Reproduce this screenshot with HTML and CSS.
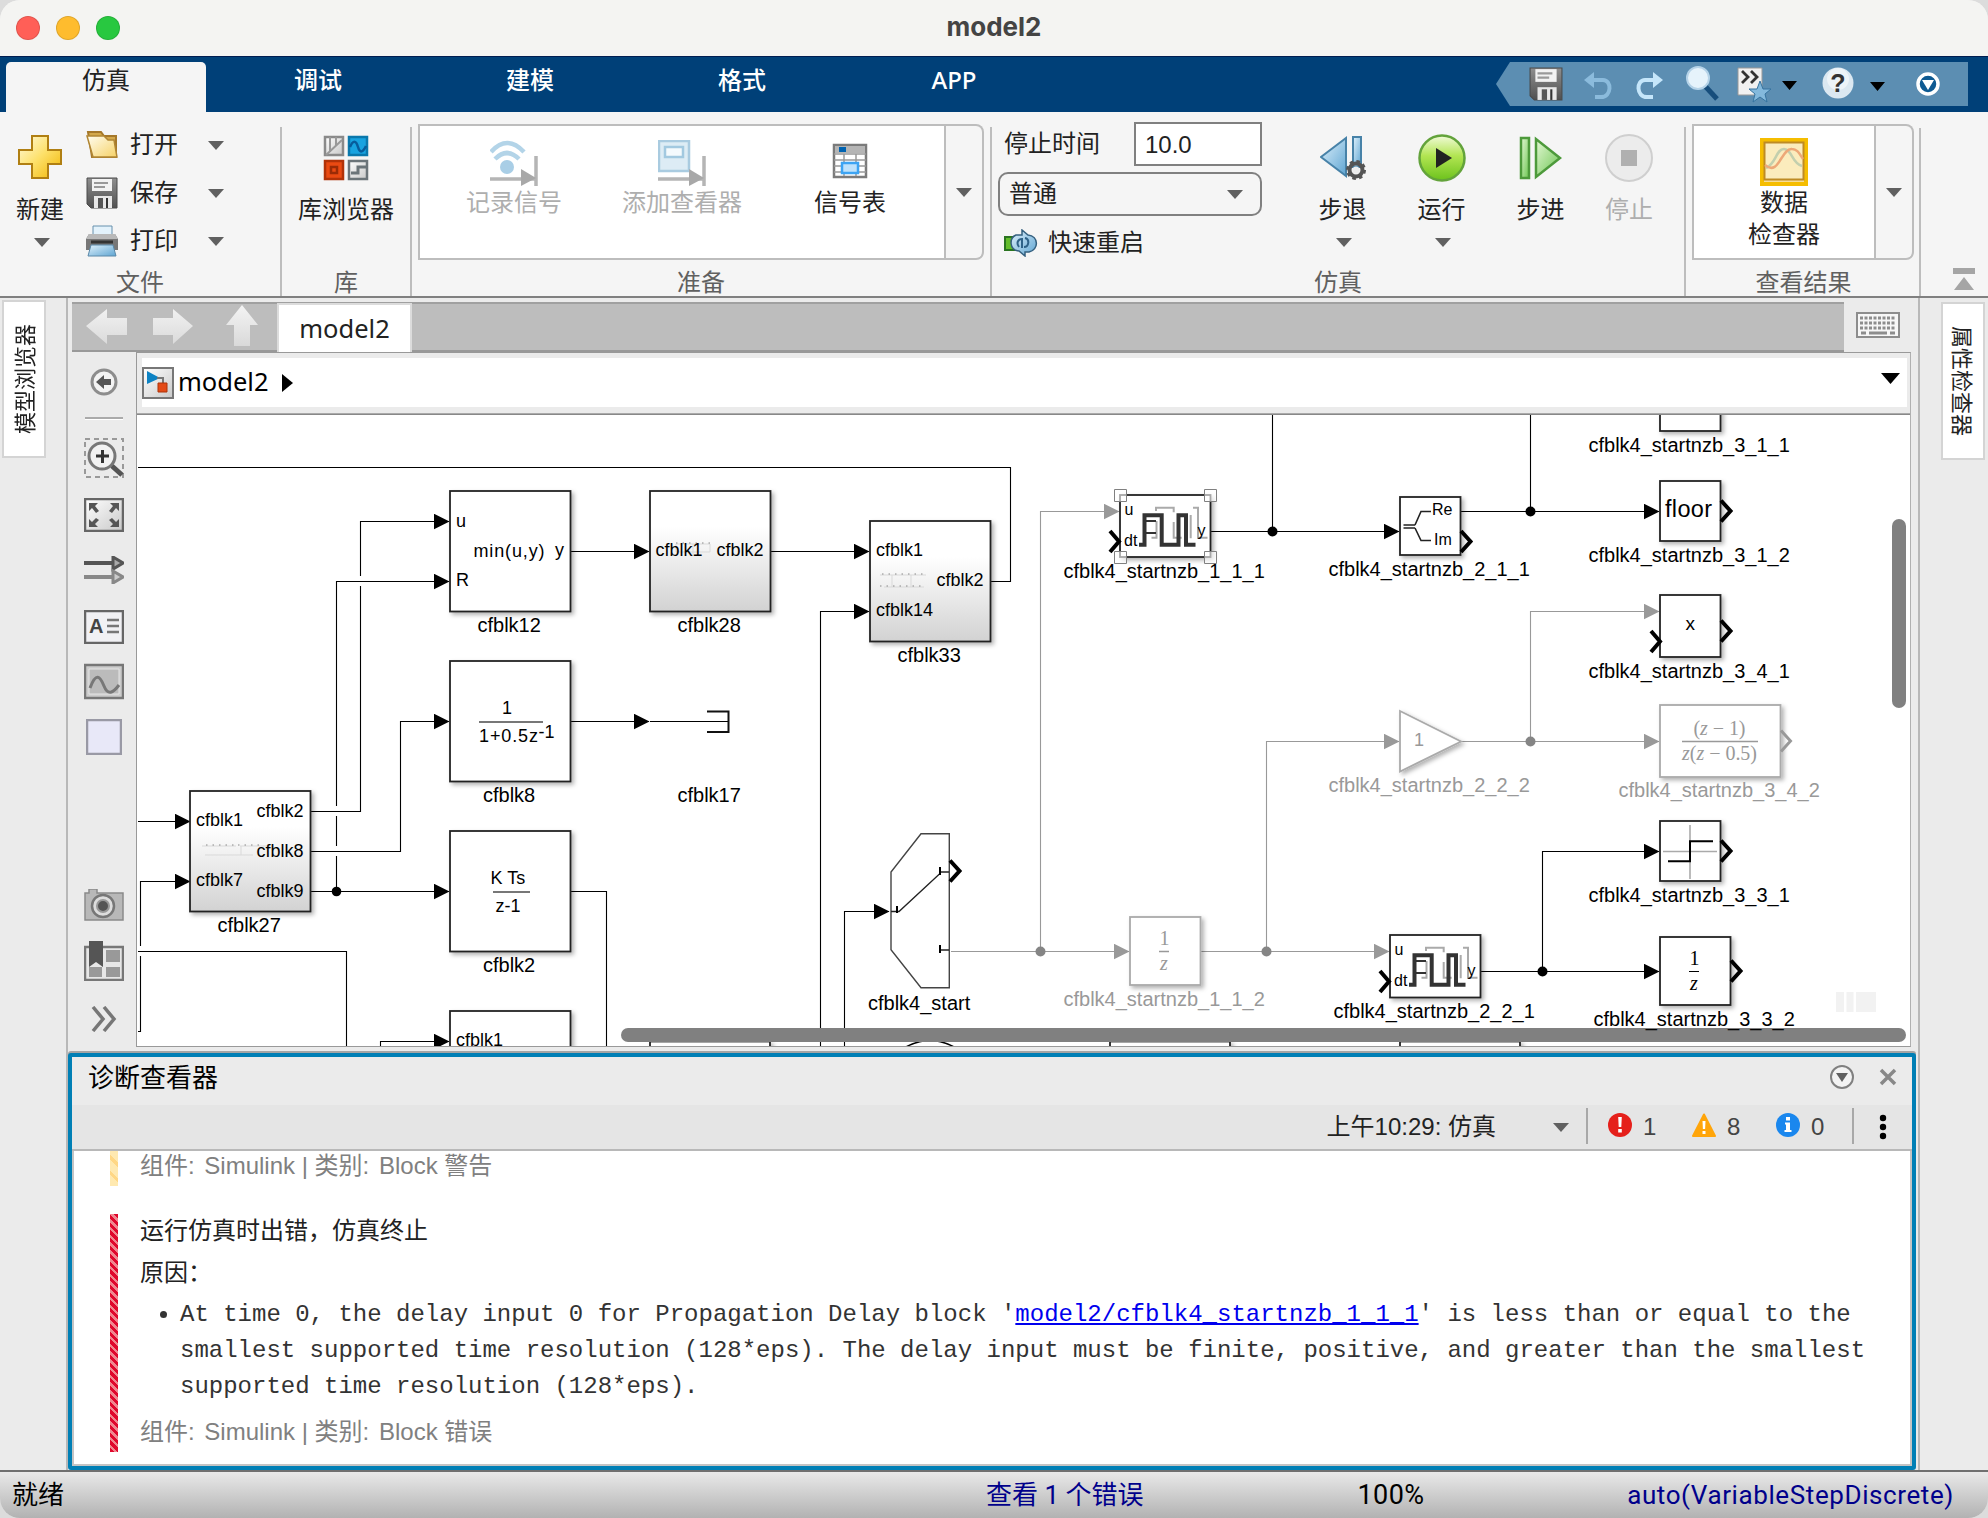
FILE: index.html
```html
<!DOCTYPE html>
<html lang="zh-CN">
<head>
<meta charset="utf-8">
<title>model2</title>
<link rel="stylesheet" href="styles.css">
</head>
<body>
<svg class="defs" width="0" height="0" aria-hidden="true">
  <defs>
    <linearGradient id="gold" x1="0" y1="0" x2="1" y2="1"><stop offset="0" stop-color="#fffbe0"/><stop offset=".5" stop-color="#fde069"/><stop offset="1" stop-color="#f0b400"/></linearGradient>
    <linearGradient id="folder" x1="0" y1="0" x2="1" y2="1"><stop offset="0" stop-color="#fffdf0"/><stop offset="1" stop-color="#f6d268"/></linearGradient>
    <linearGradient id="steel" x1="0" y1="0" x2="0" y2="1"><stop offset="0" stop-color="#8f8f8f"/><stop offset="1" stop-color="#505050"/></linearGradient>
    <linearGradient id="pale" x1="0" y1="0" x2="1" y2="1"><stop offset="0" stop-color="#ffffff"/><stop offset="1" stop-color="#c9c9c9"/></linearGradient>
    <linearGradient id="blue" x1="0" y1="0" x2="1" y2="1"><stop offset="0" stop-color="#dff1fc"/><stop offset="1" stop-color="#5fa5d2"/></linearGradient>
    <linearGradient id="lime" x1="0" y1="0" x2="0" y2="1"><stop offset="0" stop-color="#f1fbd9"/><stop offset=".45" stop-color="#b2e552"/><stop offset="1" stop-color="#6cc21c"/></linearGradient>
    <linearGradient id="green" x1="0" y1="0" x2="1" y2="1"><stop offset="0" stop-color="#e4f8d4"/><stop offset="1" stop-color="#6cc552"/></linearGradient>
    <linearGradient id="arrowfade" x1="0" y1="0" x2="0" y2="1"><stop offset="0" stop-color="#f4f4f4"/><stop offset="1" stop-color="#d9d9d9"/></linearGradient>
    <linearGradient id="sub" x1="0" y1="0" x2="0" y2="1"><stop offset=".3" stop-color="#fff"/><stop offset="1" stop-color="#d2d2d2"/></linearGradient>
    <symbol id="floppy" viewBox="0 0 32 32"><path d="M1 1h30v30H5l-4-4z" fill="url(#steel)" stroke="#4a4a4a"/><path d="M6 2h20v12H6z" fill="#f2f2f2"/><path d="M8 6h14M8 10h11" stroke="#999" stroke-width="2"/><path d="M8 19h18v12H8z" fill="#e8e8e8"/><path d="M12 21h5v10h-5z" fill="#555"/><path d="M20 21h2v10h-2z" fill="#333"/></symbol>
    <symbol id="caret" viewBox="0 0 16 9"><path d="M0 0h16L8 9z" fill="currentColor"/></symbol>
    <symbol id="pulse" viewBox="1120 495 90 62" overflow="visible">
      <g fill="none" stroke-linecap="butt">
        <path d="M1151.500 537.700h5V521M1156 511v-3.300h17.700v4.500M1173.700 522v15.700h8M1190.700 515v23.300M1193 507.700h5v30h9.500" stroke="#aaa" stroke-width="2"/>
        <path d="M1144.500 521h11.500M1144.500 533h11.500" stroke="#333" stroke-width="2"/>
        <path d="M1139 544.700h5.500v-29.400h17.200v29.400h16.800v-29.400h7.500v29.400h9.500" stroke="#333" stroke-width="4"/>
      </g>
    </symbol>
  </defs>
</svg>

<div class="window">
  <header class="titlebar">
    <div class="lights"><i class="red"></i><i class="yellow"></i><i class="green"></i></div>
    <h1>model2</h1>
  </header>

  <nav class="tabs">
    <span class="tab active">仿真</span><span class="tab">调试</span><span class="tab">建模</span><span class="tab">格式</span><span class="tab">APP</span>
    <div class="quick">
      <svg viewBox="0 0 472 44" width="472" height="44"><path d="M14 0h458v44H14L0 22z" fill="#5c8eb2"/>
        <use href="#floppy" x="33" y="5" width="34" height="34"/>
        <path d="M91 18h16c9 0 9 17-2 17h-6" fill="none" stroke="#8bbbdc" stroke-width="4"/><path d="M88 18l10-8v16z" fill="#8bbbdc"/>
        <path d="M164 18h-15c-9 0-9 17 2 17h6" fill="none" stroke="#c5e6fa" stroke-width="4"/><path d="M167 18l-10-8v16z" fill="#c5e6fa"/>
        <path d="M209 24l12 13" stroke="#174e7c" stroke-width="5"/><circle cx="202" cy="16" r="11" fill="#e6f3fb" stroke="#b5d3e8" stroke-width="2"/>
        <path d="M242 6h24v27h-24z" fill="#f1f1f1" stroke="#999"/><path d="M246 9l6 6-6 6M255 9l6 6-6 6" fill="none" stroke="#333" stroke-width="2.800"/><path d="M264 19l3 8h8l-6 5 2 8-7-5-7 5 2-8-6-5h8z" fill="#84b9dc" stroke="#36739f"/>
        <path d="M286 19h15l-7.500 9zM374 20h15l-7.500 9z"/>
        <circle cx="342" cy="21" r="15.500" fill="#dbe8f1"/><circle cx="342" cy="17" r="11" fill="#fff" opacity=".5"/><text class="qmark" x="342" y="30">?</text>
        <circle cx="432" cy="22" r="10" fill="#0e5a92" stroke="#fff" stroke-width="3.500"/><path d="M426 18h12l-6 10z" fill="#fff"/>
      </svg>
    </div>
  </nav>

  <section class="strip">
    <div class="group g-file">
      <div class="group-body">
        <div class="big new">
          <svg width="46" height="46" viewBox="0 0 46 46"><path d="M15 1h16v14h13v14H31v14H15V29H2V15h13z" fill="url(#gold)" stroke="#b07f12" stroke-width="2"/></svg>
          <span>新建</span><svg class="caret"><use href="#caret"/></svg>
        </div>
        <div class="rows">
          <div class="row"><svg width="32" height="30" viewBox="0 0 32 30"><path d="M2 2h13l3 4h12v21H6z" fill="#d3a84b" stroke="#a5782a" stroke-width="2"/><path d="M1 6h17l4 4h6l3 17H7z" fill="url(#folder)" stroke="#b18634" stroke-width="1.500"/></svg><span>打开</span><svg class="caret"><use href="#caret"/></svg></div>
          <div class="row"><svg width="32" height="32"><use href="#floppy"/></svg><span>保存</span><svg class="caret"><use href="#caret"/></svg></div>
          <div class="row"><svg width="32" height="32" viewBox="0 0 32 32"><path d="M7 1h19v11H7z" fill="#e3f2fb" stroke="#6790ad"/><path d="M3 9h26l3 5v11H0V14z" fill="#777"/><path d="M3 9h26l3 5H0z" fill="#b9b9b9"/><path d="M5 17h22" stroke="#333" stroke-width="3"/><path d="M5 20h22l3 11H2z" fill="url(#blue)" stroke="#5a88a8"/></svg><span>打印</span><svg class="caret"><use href="#caret"/></svg></div>
        </div>
      </div>
      <div class="group-label">文件</div>
    </div>

    <div class="group g-lib">
      <div class="group-body">
        <div class="big">
          <svg width="46" height="46" viewBox="0 0 46 46">
            <path d="M2 2h18v18H2z" fill="url(#pale)" stroke="#8a8a8a" stroke-width="2.500"/><path d="M7 2v15M13 2v8M3 20L19 5" stroke="#999" stroke-width="2"/>
            <path d="M26 2h18v18H26z" fill="#18a3e0" stroke="#0a78ac" stroke-width="2.500"/><path d="M27 12c3-7 6-7 8 0s5 5 8-1" fill="none" stroke="#075c9b" stroke-width="2.500"/>
            <path d="M2 26h18v18H2z" fill="#ea4a12" stroke="#b13208" stroke-width="2.500"/><path d="M8 32h6v6H8z" fill="none" stroke="#9a2b06" stroke-width="2.500"/>
            <path d="M26 26h18v18H26z" fill="url(#pale)" stroke="#6b7479" stroke-width="2.500"/><path d="M28 38h7v-6h8" fill="none" stroke="#6b7479" stroke-width="3"/>
          </svg>
          <span>库浏览器</span>
        </div>
      </div>
      <div class="group-label">库</div>
    </div>

    <div class="group g-prep">
      <div class="group-body">
        <div class="gallery">
          <div class="item off"><svg width="48" height="46" viewBox="0 0 48 46"><path d="M1 12Q17-6 34 12M5 19Q17 7 29 19" fill="none" stroke="#b3d4e8" stroke-width="4.500"/><circle cx="17" cy="27" r="7" fill="#a9cee6"/><path d="M0 39h46M46 16v30" stroke="#b5b5b5" stroke-width="3.500"/><path d="M31 29l15 9-15 8z" fill="#a8a8a8"/></svg><span>记录信号</span></div>
          <div class="item off"><svg width="48" height="46" viewBox="0 0 48 46"><path d="M1 1h30v30H1z" fill="#ddecf5" stroke="#a9cbe0" stroke-width="2.500"/><path d="M7 7h18v10H7z" fill="#f4fafd" stroke="#a2c9e0" stroke-width="2.500"/><path d="M0 39h46M46 16v30" stroke="#b5b5b5" stroke-width="3.500"/><path d="M31 29l15 9-15 8z" fill="#a8a8a8"/></svg><span>添加查看器</span></div>
          <div class="item"><svg width="36" height="46" viewBox="0 0 36 46"><path d="M2 5h32v32H2z" fill="#fff" stroke="#7b7b7b" stroke-width="2.500"/><path d="M3 6h30v7H3z" fill="#b5b5b5"/><path d="M2 14h32M2 20h32M2 26h32M2 32h32M12 14v22M24 14v22" stroke="#999" stroke-width="1.500"/><path d="M7 7h7v5H7z" fill="#0063b1"/><path d="M10 23h16v10H10z" fill="#bfe2fb" stroke="#3da4f3" stroke-width="2.500"/></svg><span>信号表</span></div>
        </div>
        <div class="more"><svg class="caret"><use href="#caret"/></svg></div>
      </div>
      <div class="group-label">准备</div>
    </div>

    <div class="group g-sim">
      <div class="group-body">
        <div class="form">
          <div class="line"><label>停止时间</label><div class="field">10.0</div></div>
          <div class="select"><span>普通</span><svg class="caret"><use href="#caret"/></svg></div>
          <div class="line restart"><svg width="34" height="28" viewBox="0 0 34 28"><path d="M1 8h10v13H1z" fill="#63bd2b" stroke="#2a7420" stroke-width="2"/><path d="M12 6h6V1l6 5c11 1 11 15 1 17h-4v4l-6-5c-10-1-10-13-3-16z" fill="url(#blue)" stroke="#35607f" stroke-width="1.500"/><path d="M15 18c-3-4-1-8 3-8v9M20 18c5 0 6-8 1-9" fill="none" stroke="#2f6288" stroke-width="2"/></svg><span>快速重启</span></div>
        </div>
        <div class="big b1"><svg width="46" height="46" viewBox="0 0 46 46"><path d="M26 3v38L1 22z" fill="url(#blue)" stroke="#4782a8" stroke-width="2"/><path d="M33 2h8v30h-8z" fill="url(#blue)" stroke="#4782a8" stroke-width="2"/><circle cx="36" cy="35" r="6.500" fill="none" stroke="#555" stroke-width="4"/><circle cx="36" cy="35" r="8.500" fill="none" stroke="#555" stroke-width="3" stroke-dasharray="3.500 3.200"/><circle cx="36" cy="35" r="3.500" fill="#eee"/></svg><span>步退</span><svg class="caret"><use href="#caret"/></svg></div>
        <div class="big b2"><svg width="48" height="48" viewBox="0 0 48 48"><circle cx="24" cy="24" r="22.500" fill="url(#lime)" stroke="#63a33b" stroke-width="2.500"/><path d="M18 14l16 10-16 10z" fill="#222"/></svg><span>运行</span><svg class="caret"><use href="#caret"/></svg></div>
        <div class="big b3"><svg width="44" height="46" viewBox="0 0 44 46"><path d="M2 3h8v40H2z" fill="url(#green)" stroke="#4d9a3b" stroke-width="2.500"/><path d="M17 4v38l24-19z" fill="url(#green)" stroke="#4d9a3b" stroke-width="2.500"/></svg><span>步进</span></div>
        <div class="big b4 off"><svg width="48" height="48" viewBox="0 0 48 48"><circle cx="24" cy="24" r="23" fill="#ececec" stroke="#cfcfcf" stroke-width="2"/><path d="M16 16h16v16H16z" fill="#b0b0b0"/></svg><span>停止</span></div>
      </div>
      <div class="group-label">仿真</div>
    </div>

    <div class="group g-res">
      <div class="group-body">
        <div class="gallery"><div class="item"><svg width="48" height="48" viewBox="0 0 48 48"><path d="M2 2h44v44H2z" fill="#f6dc98" stroke="#f5bd00" stroke-width="4"/><path d="M4.500 4.500h39v37h-39z" fill="#fbecbd" stroke="#be8b25" stroke-width="2"/><path d="M6 30C16 26 16 11 24 11s8 15 18 17" fill="none" stroke="#c3cfae" stroke-width="2.500"/><path d="M5 27c14 12 16-17 27-16 5 0 7 4 11 10" fill="none" stroke="#eda878" stroke-width="2.500"/></svg><span>数据<br>检查器</span></div></div>
        <div class="more"><svg class="caret"><use href="#caret"/></svg></div>
      </div>
      <div class="group-label">查看结果</div>
    </div>
    <svg class="collapse" width="22" height="24" viewBox="0 0 22 24"><path d="M0 0h22v6H0zM11 9l10 13H1z" fill="#a5a5a5"/></svg>
  </section>

  <main class="work">
    <aside class="side left"><span>模型浏览器</span></aside>

    <div class="center">
      <div class="docbar">
        <div class="docs">
          <svg class="arrows" width="205" height="48" viewBox="0 0 205 48" fill="url(#arrowfade)"><path d="M14 22L35 5v9h20v17H35v9zM121 22L101 5v9H81v17h20v9zM170 1l16 20h-8v21h-16V21h-8z"/></svg>
          <div class="doc">model2</div>
        </div>
        <svg class="keyboard" width="44" height="26" viewBox="0 0 44 26"><path d="M1 1h42v24H1z" fill="#f7f7f7" stroke="#8d8d8d" stroke-width="2"/><path d="M4 6h36M4 11h36M4 16h36" stroke="#8d8d8d" stroke-width="3" stroke-dasharray="3 1.500"/><path d="M5 21h5M13 21h18M34 21h5" stroke="#8d8d8d" stroke-width="3"/></svg>
      </div>

      <div class="editor">
        <div class="palette">
          <svg class="p1" width="28" height="28" viewBox="0 0 28 28"><circle cx="14" cy="14" r="12" fill="#f3f3f3" stroke="#8d8d8d" stroke-width="3"/><path d="M6 14l8-7v4h7v6h-7v4z" fill="#555"/></svg>
          <i class="sep"></i>
          <svg class="p2" width="40" height="40" viewBox="0 0 40 40"><path d="M1 1h38v38H1z" fill="none" stroke="#999" stroke-width="2" stroke-dasharray="5 4"/><circle cx="18" cy="18" r="13" fill="#f2f2f2" stroke="#777" stroke-width="3"/><path d="M12 18h13M18.500 12v13" stroke="#333" stroke-width="3"/><path d="M28 28l10 9" stroke="#555" stroke-width="5"/></svg>
          <svg class="p3" width="40" height="34" viewBox="0 0 40 34"><path d="M1 1h38v32H1z" fill="url(#pale)" stroke="#666" stroke-width="2.500"/><path d="M5 5h9l-3 3 4 5-3 2-4-5-3 3zM35 5h-9l3 3-4 5 3 2 4-5 3 3zM5 29h9l-3-3 4-4-3-2-4 4-3-3zM35 29h-9l3-3-4-4 3-2 4 4 3-3z" fill="#555"/></svg>
          <svg class="p4" width="40" height="28" viewBox="0 0 40 28"><path d="M0 7h30" stroke="#555" stroke-width="4"/><path d="M29 1l10 6-10 6z" fill="#aaa" stroke="#555" stroke-width="3"/><path d="M0 21h30" stroke="#888" stroke-width="4"/><path d="M29 15l10 6-10 6z" fill="#ccc" stroke="#888" stroke-width="3"/></svg>
          <svg class="p5" width="40" height="34" viewBox="0 0 40 34"><path d="M1 1h38v32H1z" fill="#f1f1f4" stroke="#666" stroke-width="2.500"/><text x="5" y="23">A</text><path d="M23 10h12M23 16h12M23 22h12" stroke="#777" stroke-width="2.500"/></svg>
          <svg class="p6" width="40" height="37" viewBox="0 0 40 37"><path d="M1 2h38v33H1z" fill="#ccc" stroke="#777" stroke-width="2.500"/><path d="M5 6h30v25H5z" fill="#bbb" stroke="#e5e5e5"/><path d="M6 25c6-16 10-12 14-2s9 7 15-1" fill="none" stroke="#777" stroke-width="3"/></svg>
          <svg class="p7" width="36" height="36" viewBox="0 0 36 36"><path d="M1 1h34v34H1z" fill="#e8e8f8" stroke="#9999a5" stroke-width="2.500"/></svg>
          <svg class="p8" width="40" height="32" viewBox="0 0 40 32"><path d="M5 0h8v4h26v27H1V4h4z" fill="#b8b8b8" stroke="#8a8a8a" stroke-width="1.500"/><circle cx="19" cy="17" r="11" fill="#ddd" stroke="#777" stroke-width="2.500"/><circle cx="19" cy="17" r="6" fill="#555" stroke="#999" stroke-width="2"/></svg>
          <svg class="p9" width="40" height="40" viewBox="0 0 40 40"><path d="M1 6h38v33H1z" fill="#e7e7e7" stroke="#777" stroke-width="2.500"/><path d="M22 9h14v12H22zM22 26h14v10H22zM5 26h13v10H5z" fill="#999"/><path d="M5 0h14v26l-7-5-7 5z" fill="#555"/></svg>
          <svg class="p10" width="26" height="26" viewBox="0 0 26 26"><path d="M2 1l10 12L2 25M13 1l10 12-10 12" fill="none" stroke="#777" stroke-width="3.500"/></svg>
        </div>

        <div class="pane">
          <div class="crumb">
            <svg width="32" height="32" viewBox="0 0 32 32"><path d="M1 1h30v30H1z" fill="url(#pale)" stroke="#777" stroke-width="2"/><path d="M5 4l13 7-13 6z" fill="#0d83c4"/><path d="M15 11h6v7" fill="none" stroke="#777" stroke-width="2"/><path d="M16 16h9v9h-9z" fill="#e44a16" stroke="#ad3208"/></svg>
            <span>model2</span>
            <svg class="tri" width="11" height="18" viewBox="0 0 11 18"><path d="M0 0l11 9-11 9z"/></svg>
            <svg class="drop" width="19" height="11" viewBox="0 0 19 11"><path d="M0 0h19L9.500 11z"/></svg>
          </div>
          <div class="canvas">
            <svg class="diagram" viewBox="137 415 1773 632" width="1773" height="632">
              <defs>
                <marker id="ab" markerUnits="userSpaceOnUse" markerWidth="16" markerHeight="16" refX="15.500" refY="8" orient="auto"><path d="M0 0l16 8-16 8z"/></marker>
                <marker id="ag" markerUnits="userSpaceOnUse" markerWidth="16" markerHeight="16" refX="15.500" refY="8" orient="auto"><path d="M0 0l16 8-16 8z" fill="#999"/></marker>
                <filter id="sh" x="-20%" y="-20%" width="150%" height="150%"><feDropShadow dx="2.500" dy="2.500" stdDeviation="2" flood-opacity=".3"/></filter>
              </defs>
              <g class="wire dim">
                <path d="M951 951.500H1129" marker-end="url(#ag)"/><path d="M1040.500 951.500v-440H1119" marker-end="url(#ag)"/>
                <path d="M1201 951.500H1389" marker-end="url(#ag)"/><path d="M1266.500 951.500v-210H1399" marker-end="url(#ag)"/>
                <path d="M1461 741.500H1659" marker-end="url(#ag)"/><path d="M1530.500 741.500v-130H1659" marker-end="url(#ag)"/>
              </g>
              <g class="wire">
                <path d="M138 467.500h872.500v114H991"/>
                <path d="M138 821.500H190" marker-end="url(#ab)"/><path d="M138 1031.500h2.500v-150H190" marker-end="url(#ab)"/>
                <path d="M311 811.500h49.500v-290H449" marker-end="url(#ab)"/><path d="M311 851.500h89.500v-130H449" marker-end="url(#ab)"/>
                <path d="M311 891.500H449" marker-end="url(#ab)"/><path d="M336.500 891.500v-310H449" marker-end="url(#ab)"/>
                <path class="gap" d="M360.500 576v10M336.500 806v10M336.500 846v10M140.500 946v10"/>
                <path d="M345 581.500h30M325 811.500h24M325 851.500h24M138 951.500h208.500v96M571 891.500h35.500v156"/>
                <path d="M380.500 1047v-5.500H449" marker-end="url(#ab)"/>
                <path d="M571 551.500H649" marker-end="url(#ab)"/><path d="M771 551.500H869" marker-end="url(#ab)"/>
                <path d="M820.500 1047V611.500H869" marker-end="url(#ab)"/><path d="M571 721.500H649" marker-end="url(#ab)"/><path d="M650 721.500h78"/>
                <path d="M844.500 1047V911.500H889" marker-end="url(#ab)"/>
                <path d="M1211 531.500H1399" marker-end="url(#ab)"/><path d="M1272.500 531.500V414"/>
                <path d="M1461 511.500H1659" marker-end="url(#ab)"/><path d="M1530.500 511.500V414"/>
                <path d="M1481 971.500H1659" marker-end="url(#ab)"/><path d="M1542.500 971.500v-120H1659" marker-end="url(#ab)"/>
              </g>
              <g><circle cx="336.500" cy="891.500" r="4.800"/><circle cx="1272.500" cy="531.500" r="5"/><circle cx="1530.500" cy="511.500" r="5"/><circle cx="1542.500" cy="971.500" r="5"/></g>
              <g fill="#858585"><circle cx="1040.500" cy="951.500" r="5"/><circle cx="1266.500" cy="951.500" r="5"/><circle cx="1530.500" cy="741.500" r="5"/></g>

              <g class="block" filter="url(#sh)">
                <rect x="450" y="491" width="120.500" height="120.500"/><rect x="450" y="661" width="120.500" height="120.500"/><rect x="450" y="831" width="120.500" height="120.500"/><rect x="450" y="1011" width="120.500" height="120"/>
                <rect x="650" y="491" width="120.500" height="120.500" fill="url(#sub)"/><rect x="870" y="521" width="120.500" height="120.500" fill="url(#sub)"/><rect x="190" y="791" width="120.500" height="120.500" fill="url(#sub)"/>
                <rect x="650" y="1041.500" width="120" height="60"/><rect x="1110" y="1041.500" width="120" height="60"/><rect x="1400" y="1041.500" width="120" height="60"/>
                <rect x="1120" y="495" width="90.500" height="62" stroke-width="2.500"/><rect x="1400" y="497" width="60.500" height="58"/>
                <rect x="1660" y="380" width="60.500" height="51"/><rect x="1660" y="481" width="60.500" height="60"/><rect x="1660" y="595" width="60.500" height="62"/>
                <rect x="1660" y="821" width="60.500" height="60"/><rect x="1660" y="937" width="70.500" height="68"/><rect x="1390" y="935" width="90.500" height="62.500"/>
              </g>
              <g class="block gray" filter="url(#sh)"><rect x="1130" y="917" width="70.500" height="68"/><rect x="1660" y="705" width="120.500" height="72"/><path d="M1400 711l61 30.500-61 30z"/></g>
              <path d="M921 833.700h28.300v154H921l-30-38V872z" fill="#fff" stroke="#444" stroke-width="1.400"/>
              <path d="M891 911.500h8l41-38M940 872h9M940 950h9" fill="none" stroke="#222" stroke-width="1.300"/><path d="M897 906v7M940 867v8M940 945v8" stroke="#000" stroke-width="2"/>
              <path d="M904 1048q26-15 52 0" fill="none" stroke="#000" stroke-width="1.500"/>
              <path d="M707 711.500h21.500v20.500H707" fill="none" stroke="#111" stroke-width="2"/>

              <g class="port">
                <path d="M1110 531l9 10.500-9 10.500M1461 531l9.500 10.500L1461 552M1721 500.500l9.500 10.500-9.500 10.500M1721 620.500l9.500 10.500-9.500 10.500M1651 631l9 10.500-9 10.500M1721 840.500l9.500 10.500-9.500 10.500M1731 960.500l9.500 10.500-9.500 10.500M950 860.500l9.500 10.500-9.500 10.500M1380 971l9 10.500-9 10.500"/>
                <path class="idle" d="M1781 730.500l9.500 10.500-9.500 10.500"/>
              </g>

              <g class="mini">
                <path d="M202 846h34M240 846h30M205 855h36v-9M241 855h12M676 544h34v8h-34zM693 544v12M880 575h46M884 587h40M892 575v12M911 575v12"/>
                <path class="ticks" d="M206 845h28M238 845h26M676 543h34M882 574h42M880 586h42"/>
              </g>

              <use href="#pulse" x="1120" y="495" width="90" height="62"/><use href="#pulse" x="1390" y="935" width="90" height="62"/>
              <g fill="#fff" fill-opacity=".6" stroke="#808080"><path d="M1114.500 489.500h12v12h-12zM1204.500 489.500h12v12h-12zM1114.500 551.500h12v12h-12zM1204.500 551.500h12v12h-12z"/></g>
              <path d="M1403.500 525h11.500M1403.500 528h11.500M1415 525l6-13.500h10M1415 528l6 12.500h10" fill="none" stroke="#222" stroke-width="1.600"/>
              <path d="M1690 825v54M1663 851.500h54" stroke="#aaa" stroke-width="1.600"/><path d="M1668 861.300h22v-20h23" fill="none" stroke="#000" stroke-width="2"/>
              <path d="M479 722h64M493 892h37" stroke="#777" stroke-width="2"/>

              <g class="t18">
                <text x="456" y="527">u</text><text x="456" y="586">R</text><text x="473.500" y="557" textLength="71">min(u,y)</text><text x="555" y="556">y</text>
                <text x="655.500" y="556">cfblk1</text><text x="716.500" y="556">cfblk2</text><text x="876" y="556">cfblk1</text><text x="876" y="616">cfblk14</text><text x="936.500" y="586">cfblk2</text>
                <text x="196" y="826">cfblk1</text><text x="196" y="886">cfblk7</text><text x="256.500" y="817">cfblk2</text><text x="256.500" y="857">cfblk8</text><text x="256.500" y="896.500">cfblk9</text>
                <text x="456" y="1046">cfblk1</text>
                <text x="502" y="714">1</text><text x="479" y="742" textLength="59">1+0.5z</text><text x="538.500" y="738">-1</text>
                <text x="490.500" y="884">K Ts</text><text x="495.500" y="912">z-1</text>
                <text class="s16" x="1124.500" y="515">u</text><text class="s16" x="1124" y="546">dt</text><text class="s16" x="1197.500" y="536">y</text>
                <text class="s16" x="1394.500" y="955">u</text><text class="s16" x="1394" y="986">dt</text><text class="s16" x="1467.500" y="976">y</text>
                <text class="s16" x="1432" y="515">Re</text><text class="s16" x="1434" y="545">Im</text>
                <text class="s24" x="1665" y="517" textLength="47">floor</text><text class="s19" x="1685.500" y="630">x</text>
                <text x="1414" y="746" fill="#999">1</text>
              </g>
              <g class="t20">
                <text x="477.500" y="632">cfblk12</text><text x="677.500" y="632">cfblk28</text><text x="897.500" y="662">cfblk33</text><text x="483" y="802">cfblk8</text><text x="677.500" y="802">cfblk17</text><text x="483" y="972">cfblk2</text><text x="217.500" y="932">cfblk27</text>
                <text x="868" y="1009.500">cfblk4_start</text><text x="1063.500" y="578">cfblk4_startnzb_1_1_1</text><text x="1328.500" y="576">cfblk4_startnzb_2_1_1</text>
                <text x="1588.500" y="452">cfblk4_startnzb_3_1_1</text><text x="1588.500" y="562">cfblk4_startnzb_3_1_2</text><text x="1588.500" y="678">cfblk4_startnzb_3_4_1</text><text x="1588.500" y="902">cfblk4_startnzb_3_3_1</text><text x="1333.500" y="1018">cfblk4_startnzb_2_2_1</text>
                <g fill="#999"><text x="1063.500" y="1006">cfblk4_startnzb_1_1_2</text><text x="1328.500" y="792">cfblk4_startnzb_2_2_2</text><text x="1618.500" y="797">cfblk4_startnzb_3_4_2</text></g>
              </g>
              <g class="math">
                <text x="1689.500" y="965">1</text><text class="var" x="1690" y="990">z</text><path d="M1689 971.500h10" stroke="#000"/>
                <g fill="#999"><text x="1159.500" y="945">1</text><text class="var" x="1160" y="970">z</text><path d="M1159 951.500h10M1682 741.500h76" stroke="#999" stroke-width="1.300"/>
                <text x="1693.500" y="735" textLength="52">(<tspan class="var">z</tspan> − 1)</text><text x="1682" y="759.500" textLength="75"><tspan class="var">z</tspan>(<tspan class="var">z</tspan> − 0.5)</text></g>
              </g>
              <path d="M1836 992h8v20h-8zM1846.500 992h7v20h-7zM1856 992h20v20h-20z" fill="#f2f2f2"/>
              <rect x="621" y="1028" width="1285" height="14" rx="7" fill="#808080"/><rect x="1892" y="519" width="14" height="189" rx="7" fill="#808080"/>
              <text class="t20" x="1593.500" y="1026">cfblk4_startnzb_3_3_2</text>
            </svg>
          </div>
        </div>
      </div>

      <section class="diag">
        <div class="diag-head"><h2>诊断查看器</h2>
          <svg width="26" height="26" viewBox="0 0 26 26"><circle cx="13" cy="13" r="11" fill="#f3f3f3" stroke="#808080" stroke-width="2"/><path d="M7 9h12l-6 9z" fill="#606060"/></svg>
          <svg width="18" height="18" viewBox="0 0 18 18"><path d="M2 2l14 14M16 2L2 16" stroke="#888" stroke-width="3.500"/></svg>
        </div>
        <div class="diag-bar">
          <span class="run">上午10:29: 仿真</span><svg class="caret"><use href="#caret"/></svg><i class="vr"></i>
          <svg class="ic" viewBox="0 0 24 24"><circle cx="12" cy="12" r="12" fill="#e5201b"/><path d="M10.200 4h3.600l-.5 10h-2.600zM10.200 16h3.600v3.500h-3.600z" fill="#fff"/></svg><b>1</b>
          <svg class="ic" viewBox="0 0 24 24"><path d="M12 1.500L23 23H1z" fill="#ffa50a" stroke="#ffa50a" stroke-width="2" stroke-linejoin="round"/><path d="M10.500 8h3l-.4 8h-2.200zM10.500 18h3v3h-3z" fill="#fff"/></svg><b>8</b>
          <svg class="ic" viewBox="0 0 24 24"><circle cx="12" cy="12" r="12" fill="#1a87ee"/><path d="M10 4h4v3.500h-4zM9 9.500h5V17h1.500v2h-7v-2H10v-5.500H9z" fill="#fff"/></svg><b>0</b>
          <i class="vr"></i><svg class="dots" width="8" height="26" viewBox="0 0 8 26"><circle cx="4" cy="4" r="3.200"/><circle cx="4" cy="13" r="3.200"/><circle cx="4" cy="22" r="3.200"/></svg>
        </div>
        <div class="diag-body">
          <div class="entry warn"><p class="meta"><span>组件:</span> Simulink | <span>类别:</span> Block 警告</p></div>
          <div class="entry err">
            <p class="msg">运行仿真时出错，仿真终止</p>
            <p class="why">原因：</p>
            <ul><li>At time 0, the delay input 0 for Propagation Delay block '<a>model2/cfblk4_startnzb_1_1_1</a>' is less than or equal to the smallest supported time resolution (128*eps). The delay input must be finite, positive, and greater than the smallest supported time resolution (128*eps).</li></ul>
            <p class="meta"><span>组件:</span> Simulink | <span>类别:</span> Block 错误</p>
          </div>
        </div>
      </section>
    </div>

    <aside class="side right"><span>属性检查器</span></aside>
  </main>

  <footer class="status"><span class="ready">就绪</span><span class="errs">查看 1 个错误</span><span class="zoom">100%</span><span class="solver">auto(VariableStepDiscrete)</span></footer>
</div>
</body>
</html>
```

FILE: styles.css
```css
* { box-sizing: border-box; margin: 0; padding: 0; }
body { width: 1988px; height: 1518px; overflow: hidden; background: #dcdcdc; color: #222; font: 24px/30px "Noto Sans", "Noto Sans CJK SC", sans-serif; }
svg { display: block; flex: none; }
.defs { position: absolute; }
.window { width: 1988px; height: 1518px; display: flex; flex-direction: column; border-radius: 20px; overflow: hidden; background: #ebebeb; }
.caret { width: 16px; height: 9px; color: #606060; }

.titlebar { height: 56px; flex: none; display: grid; grid-template-columns: 1fr auto 1fr; align-items: center; background: #f4f4f2; }
.lights { display: flex; gap: 16px; padding-left: 16px; }
.lights i { width: 24px; height: 24px; border-radius: 50%; border: 1px solid rgba(0,0,0,.12); }
.red { background: #ff5f57; }
.yellow { background: #febc2e; }
.green { background: #28c840; }
.titlebar h1 { font: 700 26px/30px Inter, sans-serif; color: #444; margin-top: -3px; }

.tabs { height: 56px; flex: none; display: flex; background: #004078; border-top: 1px solid #001d50; padding-left: 6px; color: #fff; font-weight: 500; }
.tab { width: 200px; height: 50px; margin: 5px 12px 0 0; padding-top: 3px; text-align: center; }
.tab.active { background: #f5f5f5; color: #222; font-weight: 400; border-radius: 5px 5px 0 0; }
.quick { width: 472px; height: 44px; margin: 5px 20px 0 auto; }
.qmark { font: 700 25px "Liberation Sans", sans-serif; text-anchor: middle; fill: #333; }

.strip { height: 186px; flex: none; display: flex; background: #f5f5f5; border-bottom: 2px solid #808080; }
.group { display: flex; flex-direction: column; position: relative; }
.group + .group { border-left: 2px solid #bdbdbd; border-image: linear-gradient(transparent 16px, #bdbdbd 16px) 1; }
.group-body { height: 156px; display: flex; }
.group-label { text-align: center; color: #606060; line-height: 28px; }
.g-file { width: 280px; }
.g-lib { width: 130px; }
.g-prep { width: 580px; }
.g-sim { width: 694px; }
.g-res { width: 237px; }
.big { display: flex; flex-direction: column; align-items: center; padding-top: 22px; white-space: nowrap; }
.big > svg:first-child { height: 48px; }
.big span { margin-top: 12px; }
.big .caret { margin: 14px 0 0 3px; }
.big.new { width: 80px; }
.rows { padding: 9px 0 0 6px; }
.row { display: flex; align-items: center; height: 48px; }
.row > svg:first-child { width: 32px; }
.row span { margin: -3px 30px 0 12px; }
.g-lib .big { width: 129px; }
.off { color: #aeaeae; }
.gallery { display: flex; background: #fff; border: 2px solid #bdbdbd; }
.g-prep .gallery { width: 528px; height: 136px; margin: 12px 0 0 6px; padding-left: 10px; }
.item { width: 168px; display: flex; flex-direction: column; align-items: center; padding-top: 14px; text-align: center; line-height: 32px; }
.more { width: 38px; height: 136px; margin-top: 12px; border: 2px solid #bdbdbd; border-left: 0; border-radius: 0 8px 8px 0; display: flex; align-items: center; justify-content: center; }
.form { width: 264px; margin: 10px 0 0 6px; }
.line { display: flex; align-items: center; justify-content: space-between; height: 44px; }
.line label { padding-left: 6px; margin-top: -3px; }
.field { width: 128px; height: 44px; border: 2px solid #808080; background: #fff; padding: 6px 9px; font: 24px/30px "Liberation Sans", sans-serif; }
.select { height: 44px; margin-top: 6px; border: 2px solid #808080; border-radius: 10px; padding: 0 17px 0 9px; display: flex; align-items: center; justify-content: space-between; }
.select span { margin-top: -3px; }
.restart { justify-content: flex-start; gap: 10px; padding-left: 6px; margin-top: 5px; }
.restart span { margin-top: -3px; }
.b1, .b2, .b3 { width: 99px; }
.b1 { margin-left: 31px; }
.b4 { width: 78px; }
.g-res .gallery { width: 184px; height: 136px; margin: 12px 0 0 6px; }
.g-res .item { width: 180px; padding-top: 12px; }
.g-res::after { content: ""; width: 2px; height: 168px; background: #bdbdbd; position: absolute; right: 0; bottom: 0; }
.collapse { margin: 156px 0 0 32px; }

.work { height: 1172px; flex: none; display: flex; }
.side { width: 68px; flex: none; padding: 2px; }
.side span { display: flex; align-items: center; justify-content: center; width: 44px; height: 158px; background: #fff; border: 2px solid #d4d4d4; writing-mode: vertical-rl; text-orientation: sideways; font-size: 22px; }
.left { border-right: 2px solid #b8b8b8; }
.left span { transform: rotate(180deg); }
.right { width: 70px; border-left: 2px solid #b8b8b8; padding: 4px 0 0 21px; }
.center { width: 1850px; display: flex; flex-direction: column; }
.docbar { height: 54px; flex: none; display: flex; padding: 4px 0 0 4px; }
.docs { width: 1772px; height: 50px; display: flex; background: #bdbdbd; border-top: 2px solid #a0a0a0; border-bottom: 2px solid #999; }
.doc { width: 135px; height: 50px; margin-top: -1px; background: #fff; border: 2px solid #dcdcdc; border-width: 2px 2px 0; text-align: center; font-size: 25.5px; line-height: 47px; }
.keyboard { margin: 10px 0 0 12px; }
.editor { height: 695px; flex: none; display: flex; padding-left: 4px; }
.palette { width: 64px; display: flex; flex-direction: column; align-items: center; }
.sep { width: 38px; height: 3px; background: #aaa; border-bottom: 1px solid #fff; }
.p1 { margin: 16px 0 21px; }
.p2 { margin-top: 18px; }
.p3 { margin-top: 20px; }
.p4 { margin-top: 24px; }
.p5 { margin-top: 26px; }
.p6 { margin-top: 19px; }
.p7 { margin-top: 19px; }
.p8 { margin-top: 134px; }
.p9 { margin-top: 20px; }
.p10 { margin-top: 25px; }
.p5 text { font: 700 20px "Liberation Sans", sans-serif; fill: #444; }
.pane { width: 1775px; border: 1px solid #999; border-right: 1px solid #b0b0b0; overflow: hidden; }
.crumb { height: 60px; display: flex; align-items: center; border: 5px solid #ebebeb; border-width: 5px 3px 6px 5px; box-shadow: 0 2px 0 #aaa; background: #fff; font-size: 25.5px; color: #000; margin-bottom: 1px; }
.crumb span { margin: -3px 13px 0 4px; }
.drop { margin: -8px 7px 0 auto; }
.canvas { height: 632px; background: #fff; border-top: 1px solid #888; overflow: hidden; }
.wire path { fill: none; stroke: #000; stroke-width: 1.1; }
.wire.dim path { stroke: #999; }
.wire .gap { stroke: #fff; stroke-width: 4; }
.block rect, .block path { stroke: #222; stroke-width: 1.8; }
.block rect:not([fill]), .block path { fill: #fff; }
.block.gray rect, .block.gray path { stroke: #aaa; }
.port path { fill: none; stroke: #000; stroke-width: 4; }
.port .idle { stroke: #999; stroke-width: 3; }
.mini path { fill: none; stroke: #d9d9d9; stroke-width: 1; }
.mini .ticks { stroke: #888; stroke-dasharray: 1.5 5; }
.t18 { font: 18px "Liberation Sans", sans-serif; }
.t20 { font: 20px "Liberation Sans", sans-serif; }
.s16 { font-size: 16px; }
.s19 { font-size: 19px; }
.s24 { font-size: 23.5px; }
.math { font: 20px "Liberation Serif", serif; }
.var { font-style: italic; }

.diag { height: 417px; margin-top: 6px; flex: none; width: 1848px; border: 4px solid #007fb5; box-shadow: 0 -2px 0 #a5a5a5; display: flex; flex-direction: column; background: #fff; border-radius: 3px; }
.diag-head { height: 48px; flex: none; background: #ebebeb; display: flex; align-items: center; gap: 24px; padding: 0 15px 8px 16px; }
.diag-head h2 { font-size: 26px; font-weight: 400; color: #000; margin-right: auto; }
.diag-bar { height: 46px; flex: none; background: #e5e5e5; border-bottom: 2px solid #b8b8b8; display: flex; align-items: center; padding-right: 25px; font-family: "Liberation Sans", "Noto Sans CJK SC", sans-serif; }
.diag-bar .run { margin-left: auto; color: #222; white-space: nowrap; }
.diag-bar .caret { margin: 0 17px 0 57px; }
.vr { width: 2px; height: 36px; background: #a8a8a8; margin-top: -3px; }
.ic { width: 24px; height: 24px; margin: -4px 11px 0 36px; }
.vr + .ic { margin-left: 20px; }
.diag-bar b { font-weight: 400; color: #444; width: 13px; }
.diag-bar b + .vr { margin-left: 28px; }
.diag-bar .dots { margin-left: 25px; }
.diag-body { flex: 1; border: 2px solid #c4c4c4; border-width: 0 2px 2px; padding-left: 36px; overflow: hidden; }
.entry { position: relative; padding-left: 30px; }
.entry::before { content: ""; position: absolute; left: 0; top: 0; bottom: 0; width: 8px; }
.warn { height: 35px; }
.warn::before { background: repeating-linear-gradient(45deg, #ffe9b0 0 8px, #ffd785 8px 11px); }
.err { margin-top: 28px; height: 238px; }
.err::before { background: repeating-linear-gradient(45deg, #e0082d 0 3px, #f0878f 3px 5.5px); }
.meta { color: #808080; font-family: "Liberation Sans", "Noto Sans CJK SC", sans-serif; }
.meta span { margin-right: 3px; }
.msg { color: #222; font-family: "Noto Sans CJK SC", sans-serif; }
.why { color: #222; margin-top: 12px; font-family: "Noto Sans CJK SC", sans-serif; }
.err ul { margin: 11px 0 12px 40px; width: 1720px; }
.err li { font: 24px/36px "Liberation Mono", monospace; color: #333; }
.err a { color: #0000ee; text-decoration: underline; }

.status { height: 48px; flex: none; border-top: 2px solid #707070; background: linear-gradient(#e9e9e9, #b2b2b2); display: flex; align-items: center; font: 26px/32px Roboto, "Noto Sans CJK SC", sans-serif; color: #000; padding: 0 34px 1px 12px; }
.errs { margin-left: 922px; color: #00008b; }
.zoom { margin-left: 214px; font-size: 27px; letter-spacing: .4px; }
.solver { margin-left: auto; color: #00008b; letter-spacing: .6px; }
```
